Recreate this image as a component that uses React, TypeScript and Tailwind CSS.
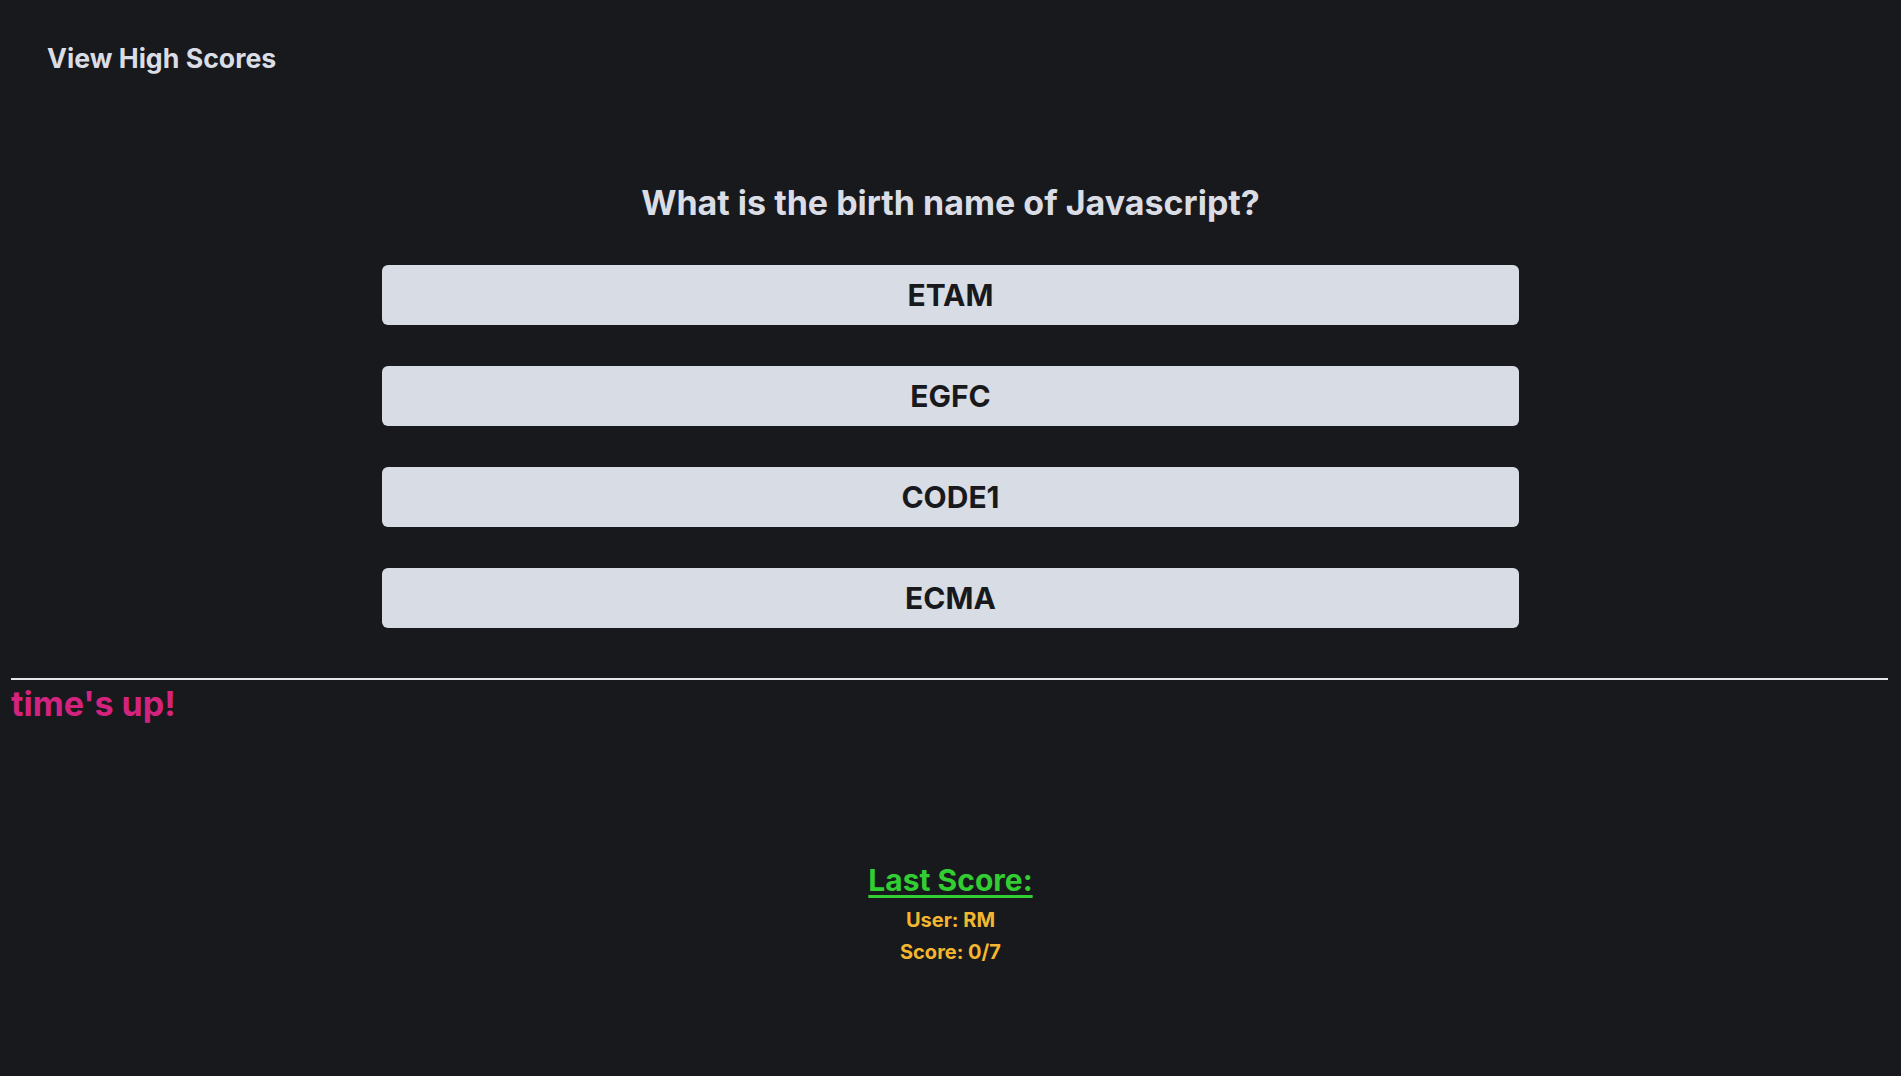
import React from "react";

const answers = ["ETAM", "EGFC", "CODE1", "ECMA"];

export default function App() {
  return (
    <div className="min-h-screen bg-[#18191c] font-['Inter','Noto_Sans',sans-serif] pt-[42px]">
      <header className="pl-[47px]">
        <a className="text-[26.7px] leading-8 font-bold text-[#dadde5] cursor-pointer">View High Scores</a>
      </header>

      <main className="mt-[109px] flex flex-col items-center">
        <h2 className="text-[34px] leading-10 font-bold text-[#dadde5]">What is the birth name of Javascript?</h2>
        <div className="mt-[42px] w-[1137px] flex flex-col gap-[41px]">
          {answers.map((a) => (
            <button
              key={a}
              className="h-[60px] w-full rounded-md bg-[#d8dce5] text-[#18191c] text-3xl font-bold"
            >
              {a}
            </button>
          ))}
        </div>
      </main>

      <hr className="mt-[50px] ml-[11px] mr-[13px] border-0 h-[2px] bg-[#e4e6ec]" />
      <p className="ml-[11px] mt-[4px] text-[34px] leading-10 font-bold text-[#d4237f]">time's up!</p>

      <section className="mt-[138px] flex flex-col items-center">
        <h3 className="text-3xl leading-9 font-bold text-[#32cd32] underline decoration-[3px] underline-offset-4">Last Score:</h3>
        <p className="mt-[6px] text-xl leading-8 font-bold text-[#f3b62f]">User: RM</p>
        <p className="text-xl leading-8 font-bold text-[#f3b62f]">Score: 0/7</p>
      </section>
    </div>
  );
}
